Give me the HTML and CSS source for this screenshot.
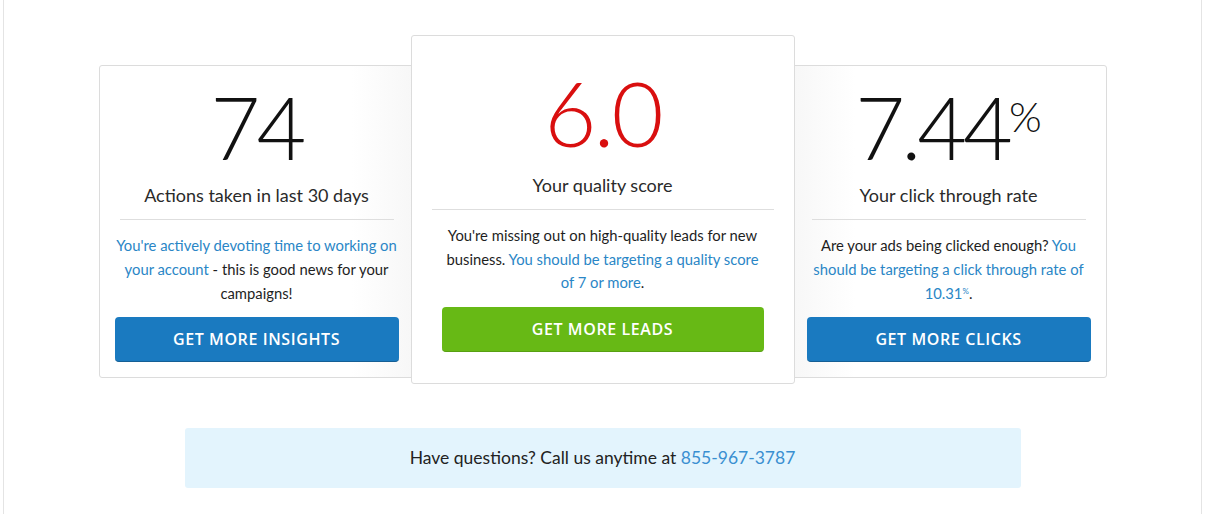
FILE: index.html
```html
<!DOCTYPE html>
<html lang="en">
<head>
<meta charset="utf-8">
<title>Account stats</title>
<link rel="stylesheet" href="styles.css">
</head>
<body>
<div class="page">
  <div class="cards">
    <div class="card card-side card-left">
      <div class="stat">74</div>
      <div class="label">Actions taken in last 30 days</div>
      <div class="desc"><a class="link" href="#">You're actively devoting time to working on your account</a> - this is good news for your campaigns!</div>
      <a class="btn btn-blue" href="#">GET MORE INSIGHTS</a>
    </div>
    <div class="card card-main">
      <div class="stat stat-main">6.0</div>
      <div class="label">Your quality score</div>
      <div class="desc">You're missing out on high-quality leads for new business. <a class="link" href="#">You should be targeting a quality score of 7 or more</a>.</div>
      <a class="btn btn-green" href="#">GET MORE LEADS</a>
    </div>
    <div class="card card-side card-right">
      <div class="stat">7.44<span class="pct">%</span></div>
      <div class="label">Your click through rate</div>
      <div class="desc">Are your ads being clicked enough? <a class="link" href="#">You should be targeting a click through rate of 10.31<span class="pct-small">%</span></a>.</div>
      <a class="btn btn-blue" href="#">GET MORE CLICKS</a>
    </div>
  </div>
  <div class="help">Have questions? Call us anytime at <a class="phone" href="#">855-967-3787</a></div>
</div>
</body>
</html>
```

FILE: styles.css
```css
* { box-sizing: border-box; }
html, body { margin: 0; padding: 0; background: #fff; }
body {
  font-family: Lato, "Open Sans", "Liberation Sans", sans-serif;
  color: #1e1e1e;
}
.page {
  margin: 0 3px;
  min-height: 514px;
  border-left: 1px solid #e4e4e4;
  border-right: 1px solid #e4e4e4;
  padding-top: 35px;
}
.cards {
  display: flex;
  justify-content: center;
  align-items: flex-start;
}
.card {
  border: 1px solid #dcdcdc;
  border-radius: 3px;
  background: #fff;
  text-align: center;
  display: flex;
  flex-direction: column;
}
.card-side {
  width: 316px;
  margin-top: 30px;
  padding: 18px 20px 15px;
  position: relative;
  z-index: 1;
}
.card-left { background: linear-gradient(90deg, #fff 80%, #f7f7f7 100%); }
.card-right { background: linear-gradient(270deg, #fff 80%, #f7f7f7 100%); }
.card-main {
  width: 384px;
  margin: 0 -4px;
  padding: 31px 20px 31px;
  position: relative;
  z-index: 2;
}
.stat {
  font-weight: 300;
  font-size: 86px;
  line-height: 86px;
  letter-spacing: -4px;
  color: #111;
}
.stat-main {
  font-size: 90px;
  line-height: 90px;
  letter-spacing: -3px;
  color: #d90f0f;
}
.pct {
  font-size: 42px;
  line-height: 42px;
  vertical-align: top;
  letter-spacing: 0;
  position: relative;
  top: 11px;
  margin-left: 0;
}
.label {
  margin-top: 13px;
  font-size: 18px;
  line-height: 24px;
  color: #2a2a2a;
  padding-bottom: 12px;
  border-bottom: 1px solid #dedede;
}
.card-main .label { margin-top: 16px; }
.desc {
  margin: 13px -6px 0;
  font-size: 14.8px;
  line-height: 24px;
  color: #1e1e1e;
}
.card-main .desc { margin: 14px 10px 0; line-height: 23.5px; }
.link { color: #2a86c6; text-decoration: none; }
.pct-small { font-size: 8px; vertical-align: top; position: relative; top: -2px; }
.btn {
  display: block;
  margin: 12px -5px 0;
  height: 45px;
  line-height: 44px;
  border-radius: 4px;
  color: #fff;
  text-decoration: none;
  font-family: "Open Sans", Lato, sans-serif;
  font-weight: 600;
  font-size: 16px;
  letter-spacing: 0.6px;
}
.card-main .btn { margin: 12px 10px 0; }
.btn-blue { background: #1a7ac0; border-bottom: 1px solid #155f95; }
.btn-green { background: #67b915; border-bottom: 1px solid #58a012; }
.help {
  width: 836px;
  margin: 44px auto 0;
  background: #e3f4fd;
  border-radius: 3px;
  height: 60px;
  line-height: 60px;
  text-align: center;
  font-size: 17.5px;
  color: #222;
}
.phone { color: #3a8fd1; text-decoration: none; }
```
